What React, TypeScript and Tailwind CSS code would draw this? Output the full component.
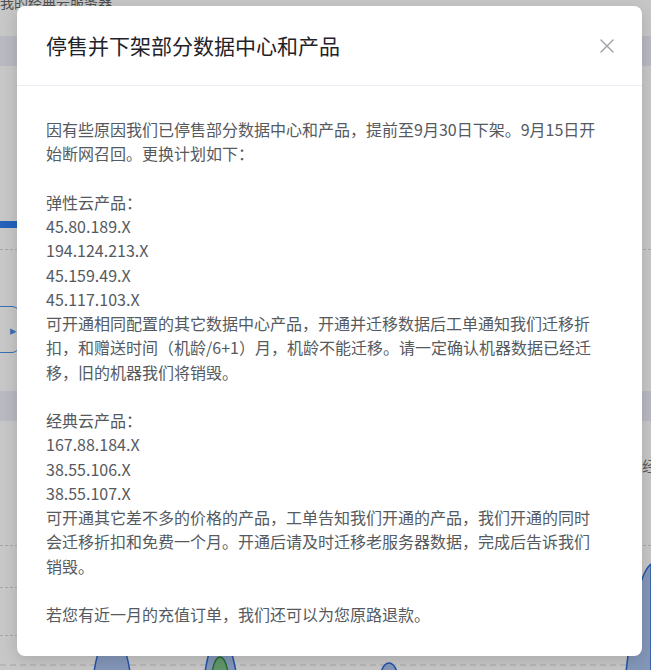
const font = {
  fontFamily: '"Noto Sans CJK SC", "Noto Sans", sans-serif',
};

const lines: string[] = [
  "因有些原因我们已停售部分数据中心和产品，提前至9月30日下架。9月15日开",
  "始断网召回。更换计划如下：",
  "",
  "弹性云产品：",
  "45.80.189.X",
  "194.124.213.X",
  "45.159.49.X",
  "45.117.103.X",
  "可开通相同配置的其它数据中心产品，开通并迁移数据后工单通知我们迁移折",
  "扣，和赠送时间（机龄/6+1）月，机龄不能迁移。请一定确认机器数据已经迁",
  "移，旧的机器我们将销毁。",
  "",
  "经典云产品：",
  "167.88.184.X",
  "38.55.106.X",
  "38.55.107.X",
  "可开通其它差不多的价格的产品，工单告知我们开通的产品，我们开通的同时",
  "会迁移折扣和免费一个月。开通后请及时迁移老服务器数据，完成后告诉我们",
  "销毁。",
  "",
  "若您有近一月的充值订单，我们还可以为您原路退款。",
];

function BackgroundPage() {
  return (
    <div className="flex flex-col w-full h-full text-[14px] text-[#666]">
      <div className="-mt-[8px] h-[20px] leading-[20px] whitespace-nowrap">
        我的经典云服务器
      </div>
      <div className="h-[24px]" />
      <div className="h-[30px] bg-[#eceef8]" />
      <div className="h-[155px]" />
      <div className="h-[7px] w-[120px] bg-[#2f7df0]" />
      <div className="h-[21px]" />
      <div className="border-t border-dashed border-[#d6d6d6]" />
      <div className="h-[56px]" />
      <div className="flex h-[47px] w-[140px] -ml-[120px] items-center justify-end rounded-[8px] border border-[#4a8fe8] pr-[2px]">
        <span className="text-[#4a8fe8] text-[13px]">▸</span>
      </div>
      <div className="h-[38px]" />
      <div className="h-[30px] bg-[#eceef8]" />
      <div className="flex justify-end h-[56px] items-end">
        <span className="-mr-[6px] text-[15px] text-[#777]">经</span>
      </div>
      <div className="h-[68px]" />
      <div className="border-t border-dashed border-[#d6d6d6]" />
      <div className="h-[41px]" />
      <div className="border-t border-dashed border-[#d6d6d6]" />
      <div className="h-[47px]" />
      <div className="border-t border-dashed border-[#d6d6d6]" />
      <svg width="651" height="110" viewBox="0 0 651 110" className="-mt-[76px] block shrink-0">
        <line x1="0" y1="105" x2="651" y2="105" stroke="#d6d6d6" strokeDasharray="6 4" />
        <path d="M94 112 C102 60 122 60 130 112 Z" fill="#a9c2ee" stroke="#2e6ad8" strokeWidth="1.5" />
        <path d="M205 112 C212 66 228 66 236 112 Z" fill="#a9c2ee" stroke="#2e6ad8" strokeWidth="1.5" />
        <path d="M212 112 C216 92 224 92 228 112 Z" fill="#7fc08a" stroke="#2b8a3e" strokeWidth="1.5" />
        <path d="M381 112 C385 100 393 100 397 112 Z" fill="#a9c2ee" stroke="#2e6ad8" strokeWidth="1.5" />
        <path d="M626 112 C632 60 638 14 651 4 L651 112 Z" fill="#a9c2ee" stroke="#2e6ad8" strokeWidth="1.5" />
      </svg>
    </div>
  );
}

function CloseIcon() {
  return (
    <svg width="14" height="14" viewBox="0 0 14 14" className="shrink-0">
      <path d="M1 1 L13 13 M13 1 L1 13" stroke="#9aa0a6" strokeWidth="1.4" strokeLinecap="round" />
    </svg>
  );
}

export default function App() {
  return (
    <div className="relative w-[651px] h-[670px] overflow-hidden bg-white" style={font}>
      <BackgroundPage />
      <div className="absolute inset-0 bg-[rgba(0,0,0,0.22)]">
        <div className="ml-[17px] mt-[6px] w-[625px] h-[650px] rounded-[8px] bg-white shadow-[0_4px_16px_rgba(0,0,0,0.15)] flex flex-col">
          <div className="h-[80px] flex items-center justify-between pl-[29px] pr-[28px] border-b border-[#ebeef5]">
            <h2 className="text-[21px] text-[#1f2329] font-normal">停售并下架部分数据中心和产品</h2>
            <CloseIcon />
          </div>
          <div className="pt-[31px] px-[29px] text-[16px] leading-[24.25px] text-[#555a60]">
            {lines.map((l, i) => (
              <div key={i} className="whitespace-nowrap h-[24.25px]">
                {l}
              </div>
            ))}
          </div>
        </div>
      </div>
    </div>
  );
}
